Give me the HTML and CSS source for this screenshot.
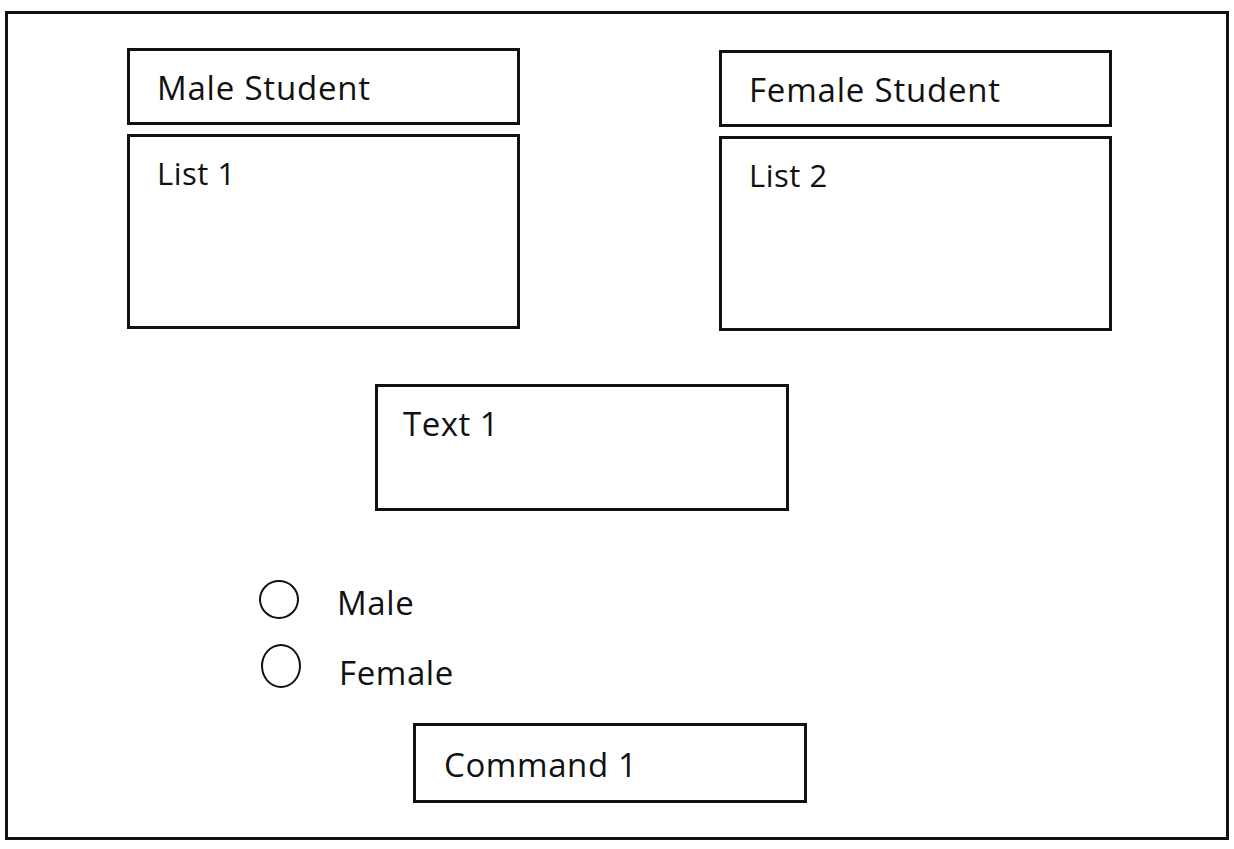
FILE: index.html
```html
<!DOCTYPE html>
<html lang="en">
<head>
  <meta charset="UTF-8">
  <title>Student Form</title>
  <meta name="viewport" content="width=device-width, initial-scale=1.0">
  <link rel="stylesheet" href="styles.css">
</head>
<body>
  <div class="form-frame">
    <div class="lists-row">
      <div class="list-column">
        <div class="caption-box">Male Student</div>
        <div class="list-box">List 1</div>
      </div>
      <div class="list-column list-column-right">
        <div class="caption-box">Female Student</div>
        <div class="list-box">List 2</div>
      </div>
    </div>

    <div class="text-box">Text 1</div>

    <div class="radio-group">
      <label class="radio-row">
        <span class="radio-circle"></span>
        <span class="radio-label">Male</span>
      </label>
      <label class="radio-row radio-row-second">
        <span class="radio-circle radio-circle-tall"></span>
        <span class="radio-label">Female</span>
      </label>
    </div>

    <div class="command-button">Command 1</div>
  </div>
</body>
</html>
```

FILE: styles.css
```css
* {
  box-sizing: border-box;
  margin: 0;
  padding: 0;
}
body {
  background-color: #fff;
  color: #111;
  font-family: "Open Sans", "Noto Sans", sans-serif;
  font-size: 33px;
  line-height: 1;
}

.form-frame {
  width: 1224px;
  height: 829px;
  margin: 11px 0 0 5px;
  padding: 34px 0 0 119px;
  border: 3px solid #111;
}

.lists-row {
  display: flex;
  gap: 199px;
}
.list-column {
  display: flex;
  flex-direction: column;
  gap: 9px;
  width: 393px;
}
.list-column-right {
  margin-top: 2px;
}
.caption-box {
  display: flex;
  align-items: center;
  height: 77px;
  padding: 2px 0 0 27px;
  border: 3px solid #111;
  letter-spacing: 0.8px;
}
.list-box {
  height: 195px;
  padding: 21px 0 0 27px;
  border: 3px solid #111;
  font-size: 31px;
  letter-spacing: 0.5px;
}

.text-box {
  width: 414px;
  height: 127px;
  margin: 53px 0 0 248px;
  padding: 20px 0 0 25px;
  border: 3px solid #111;
  letter-spacing: 0.5px;
}

.radio-group {
  display: flex;
  flex-direction: column;
  gap: 23px;
  margin: 69px 0 0 132px;
}
.radio-row {
  display: flex;
  align-items: center;
  gap: 38px;
}
.radio-row-second {
  padding-left: 2px;
}
.radio-row-second .radio-label {
  padding-top: 14px;
}
.radio-circle {
  width: 40px;
  height: 39px;
  border: 2px solid #111;
  border-radius: 50%;
}
.radio-circle-tall {
  height: 44px;
}
.radio-label {
  padding-top: 6px;
  letter-spacing: 0.6px;
}

.command-button {
  display: flex;
  align-items: center;
  width: 394px;
  height: 80px;
  margin: 34px 0 0 286px;
  padding: 2px 0 0 28px;
  border: 3px solid #111;
  letter-spacing: 0.6px;
}
```
